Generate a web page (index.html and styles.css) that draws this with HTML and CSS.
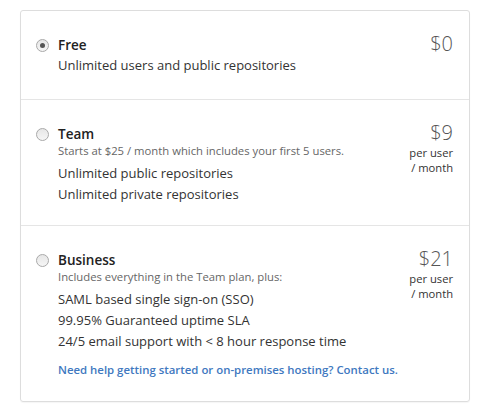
FILE: index.html
```html
<!DOCTYPE html>
<html>
<head>
<meta charset="utf-8">
<link rel="stylesheet" href="styles.css">
</head>
<body>
<div class="plans">
  <label class="plan plan-free">
    <span class="radio checked"></span>
    <div class="info">
      <div class="name">Free</div>
      <ul class="features">
        <li>Unlimited users and public repositories</li>
      </ul>
    </div>
    <div class="price">
      <div class="amount">$0</div>
    </div>
  </label>
  <label class="plan plan-team">
    <span class="radio"></span>
    <div class="info">
      <div class="name">Team</div>
      <div class="note">Starts at $25 / month which includes your first 5 users.</div>
      <ul class="features">
        <li>Unlimited public repositories</li>
        <li>Unlimited private repositories</li>
      </ul>
    </div>
    <div class="price">
      <div class="amount">$9</div>
      <div class="unit">per user</div>
      <div class="unit">/ month</div>
    </div>
  </label>
  <label class="plan plan-business">
    <span class="radio"></span>
    <div class="info">
      <div class="name">Business</div>
      <div class="note">Includes everything in the Team plan, plus:</div>
      <ul class="features">
        <li>SAML based single sign-on (SSO)</li>
        <li>99.95% Guaranteed uptime SLA</li>
        <li>24/5 email support with &lt; 8 hour response time</li>
      </ul>
      <a class="contact" href="#">Need help getting started or on-premises hosting? Contact us.</a>
    </div>
    <div class="price">
      <div class="amount">$21</div>
      <div class="unit">per user</div>
      <div class="unit">/ month</div>
    </div>
  </label>
</div>
</body>
</html>
```
FILE: styles.css
```css
* { box-sizing: border-box; }
html, body { background: #fff; }
body {
  margin: 0;
  padding: 10px 16px 12px 20px;
  font-family: "Open Sans", "Noto Sans", sans-serif;
  color: #333;
  font-size: 13px;
}
.plans {
  width: 450px;
  border: 1px solid #ddd;
  border-radius: 3px;
  box-shadow: 0 1px 1px rgba(0,0,0,0.04);
}
.plan {
  display: flex;
  align-items: flex-start;
  padding: 24px 16px 22px 15px;
  border-top: 1px solid #e5e5e5;
}
.plan-free { border-top: 0; padding-bottom: 23px; }
.plan-team { padding-bottom: 20px; }
.radio {
  flex: none;
  width: 13px;
  height: 13px;
  margin-top: 4px;
  margin-right: 9px;
  border-radius: 50%;
  border: 1px solid #a9a9a9;
  background: linear-gradient(#e6e6e6, #f6f6f6);
  display: flex;
  align-items: center;
  justify-content: center;
}
.radio.checked::after {
  content: "";
  width: 5px;
  height: 5px;
  border-radius: 50%;
  background: #555;
}
.info { flex: 1; }
.name {
  font-weight: 600;
  font-size: 13.5px;
  line-height: 20px;
  color: #222;
}
.note {
  font-size: 11.3px;
  line-height: 16px;
  color: #666;
  margin-top: -1px;
  margin-bottom: 4px;
}
.features {
  list-style: none;
  margin: 0;
  padding: 0;
}
.features li {
  font-size: 13px;
  line-height: 21px;
}
.contact {
  display: block;
  margin-top: 9px;
  font-size: 11.4px;
  font-weight: 600;
  color: #4078c0;
  text-decoration: none;
  line-height: 18px;
}
.price {
  flex: none;
  text-align: right;
}
.amount {
  font-size: 20px;
  font-weight: 300;
  line-height: 25px;
  margin-top: -4px;
  color: #555;
}
.unit {
  font-size: 11.2px;
  line-height: 15.3px;
  color: #333;
}
```
